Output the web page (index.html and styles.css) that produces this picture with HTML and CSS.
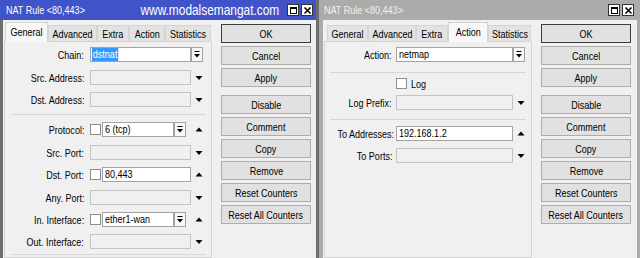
FILE: index.html
```html
<!DOCTYPE html>
<html>
<head>
<meta charset="utf-8">
<title>NAT Rule</title>
<link rel="stylesheet" href="styles.css">
</head>
<body>
<div class="win win-a">
  <div class="titlebar">
    <span class="title t">NAT Rule &lt;80,443&gt;</span>
    <span class="watermark t">www.modalsemangat.com</span>
    <span class="tbtn"><svg width="9" height="9" viewBox="0 0 9 9"><rect x="1.5" y="1.5" width="6" height="6" fill="none" stroke="#000"/><line x1="1" y1="2.5" x2="8" y2="2.5" stroke="#000"/></svg></span>
    <span class="tbtn"><svg width="9" height="9" viewBox="0 0 9 9"><path d="M1.5 1.5L7.5 7.5M7.5 1.5L1.5 7.5" stroke="#000" stroke-width="1.6"/></svg></span>
  </div>
  <div class="body">
    <div class="tabctl">
      <div class="tabs">
        <div class="tab active tw43"><span class="t">General</span></div>
        <div class="tab tw49"><span class="t">Advanced</span></div>
        <div class="tab tw32"><span class="t">Extra</span></div>
        <div class="tab tw36"><span class="t">Action</span></div>
        <div class="tab tw46"><span class="t">Statistics</span></div>
      </div>
      <div class="panel">
        <div class="row m5"><div class="lbl"><span class="t">Chain:</span></div><div class="ctl"><div class="inp w101"><span class="sel t">dstnat</span></div><div class="dd"><svg width="10" height="13" viewBox="0 0 10 13"><line x1="2.5" y1="3.5" x2="7.5" y2="3.5" stroke="#000"/><polygon points="2,6 8,6 5,9.5" fill="#000"/></svg></div></div></div>
        <div class="row m8"><div class="lbl"><span class="t">Src. Address:</span></div><div class="ctl"><div class="inp dis w101"></div><div class="arr"><svg width="8" height="15" viewBox="0 0 8 15"><polygon points="0.5,6 7.5,6 4,10" fill="#000"/></svg></div></div></div>
        <div class="row m7"><div class="lbl"><span class="t">Dst. Address:</span></div><div class="ctl"><div class="inp dis w101"></div><div class="arr"><svg width="8" height="15" viewBox="0 0 8 15"><polygon points="0.5,6 7.5,6 4,10" fill="#000"/></svg></div></div></div>
        <div class="sep m7"></div>
        <div class="row m7"><div class="lbl"><span class="t">Protocol:</span></div><div class="ctl"><div class="cb"></div><div class="inp w72"><span class="t">6 (tcp)</span></div><div class="dd"><svg width="10" height="13" viewBox="0 0 10 13"><line x1="2.5" y1="3.5" x2="7.5" y2="3.5" stroke="#000"/><polygon points="2,6 8,6 5,9.5" fill="#000"/></svg></div><div class="arr"><svg width="8" height="15" viewBox="0 0 8 15"><polygon points="0.5,9.5 7.5,9.5 4,5.5" fill="#000"/></svg></div></div></div>
        <div class="row m8"><div class="lbl"><span class="t">Src. Port:</span></div><div class="ctl"><div class="inp dis w101"></div><div class="arr"><svg width="8" height="15" viewBox="0 0 8 15"><polygon points="0.5,6 7.5,6 4,10" fill="#000"/></svg></div></div></div>
        <div class="row m7"><div class="lbl"><span class="t">Dst. Port:</span></div><div class="ctl"><div class="cb"></div><div class="inp w89"><span class="t">80,443</span></div><div class="arr"><svg width="8" height="15" viewBox="0 0 8 15"><polygon points="0.5,9.5 7.5,9.5 4,5.5" fill="#000"/></svg></div></div></div>
        <div class="row m8"><div class="lbl"><span class="t">Any. Port:</span></div><div class="ctl"><div class="inp dis w101"></div><div class="arr"><svg width="8" height="15" viewBox="0 0 8 15"><polygon points="0.5,6 7.5,6 4,10" fill="#000"/></svg></div></div></div>
        <div class="row m7"><div class="lbl"><span class="t">In. Interface:</span></div><div class="ctl"><div class="cb"></div><div class="inp w72"><span class="t">ether1-wan</span></div><div class="dd"><svg width="10" height="13" viewBox="0 0 10 13"><line x1="2.5" y1="3.5" x2="7.5" y2="3.5" stroke="#000"/><polygon points="2,6 8,6 5,9.5" fill="#000"/></svg></div><div class="arr"><svg width="8" height="15" viewBox="0 0 8 15"><polygon points="0.5,9.5 7.5,9.5 4,5.5" fill="#000"/></svg></div></div></div>
        <div class="row m7"><div class="lbl"><span class="t">Out. Interface:</span></div><div class="ctl"><div class="inp dis w101"></div><div class="arr"><svg width="8" height="15" viewBox="0 0 8 15"><polygon points="0.5,6 7.5,6 4,10" fill="#000"/></svg></div></div></div>
        <div class="sep m5"></div>
      </div>
    </div>
    <div class="btns">
      <div class="btn def"><span class="t">OK</span></div>
      <div class="btn"><span class="t">Cancel</span></div>
      <div class="btn"><span class="t">Apply</span></div>
      <div class="btn gapb"><span class="t">Disable</span></div>
      <div class="btn"><span class="t">Comment</span></div>
      <div class="btn"><span class="t">Copy</span></div>
      <div class="btn"><span class="t">Remove</span></div>
      <div class="btn"><span class="t">Reset Counters</span></div>
      <div class="btn"><span class="t">Reset All Counters</span></div>
    </div>
  </div>
</div>

<div class="win win-i">
  <div class="titlebar">
    <span class="title t">NAT Rule &lt;80,443&gt;</span>
    <span class="spacer"></span>
    <span class="tbtn"><svg width="9" height="9" viewBox="0 0 9 9"><rect x="1.5" y="1.5" width="6" height="6" fill="none" stroke="#000"/><line x1="1" y1="2.5" x2="8" y2="2.5" stroke="#000"/></svg></span>
    <span class="tbtn"><svg width="9" height="9" viewBox="0 0 9 9"><path d="M1.5 1.5L7.5 7.5M7.5 1.5L1.5 7.5" stroke="#000" stroke-width="1.6"/></svg></span>
  </div>
  <div class="body">
    <div class="tabctl">
      <div class="tabs">
        <div class="tab tw41"><span class="t">General</span></div>
        <div class="tab tw48"><span class="t">Advanced</span></div>
        <div class="tab tw32"><span class="t">Extra</span></div>
        <div class="tab active tw40"><span class="t">Action</span></div>
        <div class="tab tw43"><span class="t">Statistics</span></div>
      </div>
      <div class="panel">
        <div class="row m5"><div class="lbl"><span class="t">Action:</span></div><div class="ctl"><div class="inp w117"><span class="t">netmap</span></div><div class="dd"><svg width="10" height="13" viewBox="0 0 10 13"><line x1="2.5" y1="3.5" x2="7.5" y2="3.5" stroke="#000"/><polygon points="2,6 8,6 5,9.5" fill="#000"/></svg></div></div></div>
        <div class="sep m10"></div>
        <div class="row m3"><div class="lbl"></div><div class="ctl"><div class="cb"></div><span class="cbtext t">Log</span></div></div>
        <div class="row m4"><div class="lbl"><span class="t">Log Prefix:</span></div><div class="ctl"><div class="inp dis w117"></div><div class="arr"><svg width="8" height="15" viewBox="0 0 8 15"><polygon points="0.5,6 7.5,6 4,10" fill="#000"/></svg></div></div></div>
        <div class="sep m9"></div>
        <div class="row m6"><div class="lbl"><span class="t">To Addresses:</span></div><div class="ctl"><div class="inp w117"><span class="t">192.168.1.2</span></div><div class="arr"><svg width="8" height="15" viewBox="0 0 8 15"><polygon points="0.5,9.5 7.5,9.5 4,5.5" fill="#000"/></svg></div></div></div>
        <div class="row m7"><div class="lbl"><span class="t">To Ports:</span></div><div class="ctl"><div class="inp dis w117"></div><div class="arr"><svg width="8" height="15" viewBox="0 0 8 15"><polygon points="0.5,6 7.5,6 4,10" fill="#000"/></svg></div></div></div>
      </div>
    </div>
    <div class="btns">
      <div class="btn def"><span class="t">OK</span></div>
      <div class="btn"><span class="t">Cancel</span></div>
      <div class="btn"><span class="t">Apply</span></div>
      <div class="btn gapb"><span class="t">Disable</span></div>
      <div class="btn"><span class="t">Comment</span></div>
      <div class="btn"><span class="t">Copy</span></div>
      <div class="btn"><span class="t">Remove</span></div>
      <div class="btn"><span class="t">Reset Counters</span></div>
      <div class="btn"><span class="t">Reset All Counters</span></div>
    </div>
  </div>
</div>
</body>
</html>
```

FILE: styles.css
```css
* { box-sizing: border-box; }
html, body { margin: 0; padding: 0; }
body {
  width: 640px;
  height: 258px;
  overflow: hidden;
  display: flex;
  font-family: "Liberation Sans", Arial, sans-serif;
  font-size: 11px;
  color: #000;
  background: #808080;
}
/* Narrow (Tahoma-like, horizontally condensed) text */
.t {
  display: inline-block;
  white-space: nowrap;
  transform: scaleX(0.82);
  transform-origin: center center;
}

.win {
  display: flex;
  flex-direction: column;
  height: 258px;
  flex: none;
}
.win-a { width: 319px; border-right: 3px solid #6e6e6e; }
.win-i { width: 321px; border-right: 3px solid #ababab; }

.titlebar {
  height: 20px;
  flex: none;
  display: flex;
  align-items: center;
  padding-right: 3px;
  white-space: nowrap;
  overflow: hidden;
}
.win-a .titlebar { background: #4153c9; color: #fff; padding-left: 6px; }
.win-i .titlebar { background: #ababab; color: #f0f0f0; padding-left: 5px; }
.title { font-size: 11px; transform-origin: left center; flex: none; }
.watermark { margin-left: auto; margin-right: 6px; font-size: 14.5px; transform-origin: right center; flex: none; }
.spacer { margin-left: auto; }
.tbtn {
  width: 12px;
  height: 12px;
  margin-left: 2px;
  background: #fff;
  border: 1px solid #333;
  display: flex;
  align-items: center;
  justify-content: center;
  flex: none;
}

.body {
  flex: 1;
  display: flex;
  background: #f0f0f0;
  min-height: 0;
}
.win-a .body { border-left: 3px solid #6e6e6e; }
.win-i .body { border-left: 4px solid #ababab; }

.tabctl {
  width: 208px;
  margin-left: 1px;
  display: flex;
  flex-direction: column;
  padding-top: 2px;
  flex: none;
}
.tabs {
  height: 19px;
  display: flex;
  align-items: flex-end;
  padding-left: 1px;
  flex: none;
}
.win-i .tabs { padding-left: 3px; }
.tab {
  height: 16px;
  background: #e3e3e3;
  border: 1px solid #d4d4d4;
  border-bottom: 0;
  display: flex;
  align-items: center;
  justify-content: center;
  white-space: nowrap;
  padding-top: 1px;
  flex: none;
}
.tab.active {
  height: 20px;
  margin-bottom: -1px;
  background: #f7f7f7;
  position: relative;
  z-index: 1;
  padding-top: 0;
  padding-bottom: 2px;
}
.tw40 { width: 40px; } .tw41 { width: 41px; } .tw43 { width: 43px; }
.tw46 { width: 46px; } .tw48 { width: 48px; } .tw49 { width: 49px; }
.tw32 { width: 32px; } .tw36 { width: 36px; }

.panel {
  flex: 1;
  border: 1px solid #d4d4d4;
  background: #f0f0f0;
}
.row { display: flex; align-items: center; height: 15px; }
.lbl {
  width: 85px;
  flex: none;
  text-align: right;
  padding-right: 6px;
  white-space: nowrap;
}
.lbl .t { transform-origin: right center; }
.win-i .lbl { width: 71px; padding-right: 4px; }
.ctl { display: flex; align-items: center; width: 113px; height: 15px; }
.win-i .ctl { width: 129px; }
.inp {
  height: 15px;
  border: 1px solid #a3a3a3;
  background: #fff;
  padding-left: 2px;
  line-height: 13px;
  white-space: nowrap;
  overflow: hidden;
  flex: none;
}
.inp .t { transform-origin: left center; }
.inp.dis { background: #f0f0f0; border-color: #c4c4c4; }
.sel { background: #3399ff; color: #fff; margin-left: -1px; padding: 0 1px; height: 13px; }
.inp .sel { transform-origin: left center; }
.w101 { width: 101px; } .w72 { width: 72px; } .w89 { width: 89px; } .w117 { width: 117px; }
.dd {
  width: 12px;
  height: 15px;
  border: 1px solid #a3a3a3;
  background: #f7f7f7;
  flex: none;
  display: flex;
  align-items: center;
  justify-content: center;
}
.arr { margin-left: auto; width: 8px; height: 15px; display: flex; flex: none; }
.cb {
  width: 11px;
  height: 11px;
  border: 1px solid #8e8e8e;
  background: #fff;
  margin-right: 1px;
  flex: none;
}
.cbtext { margin-left: 3px; transform-origin: left center; }
.sep { height: 1px; background: #d6d6d6; margin-left: 6px; margin-right: 5px; }
.win-i .sep { margin-left: 5px; }

.m3 { margin-top: 3px; } .m4 { margin-top: 4px; } .m5 { margin-top: 5px; }
.m6 { margin-top: 6px; } .m7 { margin-top: 7px; } .m8 { margin-top: 8px; }
.m9 { margin-top: 9px; } .m10 { margin-top: 10px; }

.btns {
  width: 90px;
  margin-left: 9px;
  padding-top: 4px;
  display: flex;
  flex-direction: column;
  gap: 3px;
  flex: none;
}
.btn {
  height: 19px;
  flex: none;
  border: 1px solid #adadad;
  background: #e1e1e1;
  display: flex;
  align-items: center;
  justify-content: center;
  white-space: nowrap;
}
.btn.def { border-color: #3c3c3c; }
.btn.gapb { margin-top: 5px; }
```
